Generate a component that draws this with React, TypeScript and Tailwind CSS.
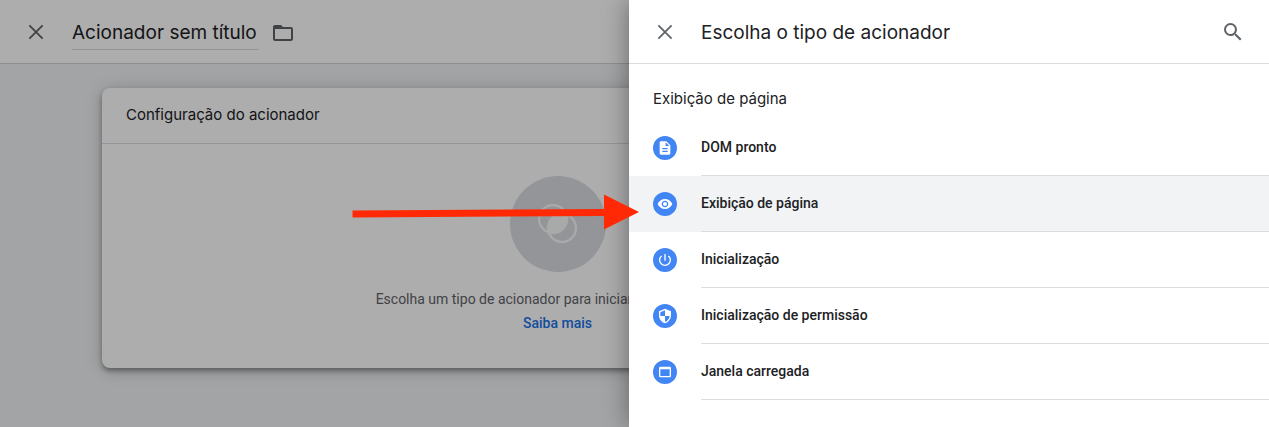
import type { IconType } from "react-icons";
import {
  MdDescription,
  MdFolderOpen,
  MdPowerSettingsNew,
  MdSearch,
  MdSecurity,
  MdVisibility,
  MdWebAsset,
} from "react-icons/md";

type Trigger = { label: string; icon: IconType; active?: boolean };

const triggers: Trigger[] = [
  { label: "DOM pronto", icon: MdDescription },
  { label: "Exibição de página", icon: MdVisibility, active: true },
  { label: "Inicialização", icon: MdPowerSettingsNew },
  { label: "Inicialização de permissão", icon: MdSecurity },
  { label: "Janela carregada", icon: MdWebAsset },
];

function CloseIcon() {
  return (
    <svg viewBox="0 0 24 24" className="size-6" fill="none" stroke="currentColor" strokeWidth="1.8" aria-hidden="true">
      <path d="M5.4 5.4l13.2 13.2M18.6 5.4L5.4 18.6" />
    </svg>
  );
}

function TriggerBadge() {
  return (
    <div className="flex size-24 items-center justify-center rounded-full bg-[#dadce0]">
      <svg viewBox="0 0 40 40" className="size-10" fill="none" aria-hidden="true">
        <clipPath id="lens">
          <circle cx="15" cy="15" r="14" />
        </clipPath>
        <circle cx="24" cy="24" r="14" fill="#f8f9fa" clipPath="url(#lens)" />
        <circle cx="15" cy="15" r="14" stroke="#f8f9fa" strokeWidth="2.4" />
        <circle cx="24" cy="24" r="14" stroke="#f8f9fa" strokeWidth="2.4" />
      </svg>
    </div>
  );
}

function TriggerEditor() {
  return (
    <div className="flex min-h-screen flex-col bg-[#eff2f5]">
      <header className="flex h-16 items-center border-b border-[#d2d3d4] bg-white px-6 text-[#5f6368]">
        <button type="button" aria-label="Fechar">
          <CloseIcon />
        </button>
        <input
          type="text"
          aria-label="Nome do acionador"
          defaultValue="Acionador sem título"
          className="ml-6 h-9 w-[187px] border-b border-[#dadce0] pt-0.5 font-[Inter,sans-serif] text-[19px] text-[#202124] outline-none"
        />
        <button type="button" aria-label="Pasta" className="mt-0.5 ml-3">
          <MdFolderOpen className="size-6" />
        </button>
      </header>
      <main className="mt-6 mr-64 mb-14 ml-[102px] rounded-lg bg-white shadow-[0_3px_5px_rgba(0,0,0,0.35),0_2px_18px_rgba(0,0,0,0.2)]">
        <h2 className="flex h-14 items-center border-b border-[#dadce0] px-6 font-[Inter,sans-serif] text-[15px] text-[#202124]">
          Configuração do acionador
        </h2>
        <div className="flex flex-col items-center pt-8 pb-[33px] text-sm leading-6">
          <TriggerBadge />
          <p className="mt-[15px] whitespace-nowrap text-[#5f6368]">
            Escolha um tipo de acionador para iniciar a configuração...
          </p>
          <a href="#saiba-mais" className="font-medium text-[#1a73e8]">
            Saiba mais
          </a>
        </div>
      </main>
    </div>
  );
}

function TriggerDrawer() {
  return (
    <aside className="absolute inset-y-0 right-0 w-[640px] bg-white shadow-[0_0_24px_rgba(0,0,0,0.4)]">
      <header className="flex h-16 items-center border-b border-[#dadce0] px-6 text-[#5f6368]">
        <button type="button" aria-label="Fechar painel">
          <CloseIcon />
        </button>
        <h1 className="ml-6 flex-1 pt-1 font-[Inter,sans-serif] text-[19px] text-[#202124]">
          Escolha o tipo de acionador
        </h1>
        <button type="button" aria-label="Pesquisar">
          <MdSearch className="size-6" />
        </button>
      </header>
      <h2 className="px-6 pt-[23px] pb-[9px] font-[Inter,sans-serif] text-[15px] leading-6 text-[#202124]">
        Exibição de página
      </h2>
      <ul>
        {triggers.map(({ label, icon: Icon, active }) => (
          <li key={label}>
            <button
              type="button"
              className={`flex h-14 w-full items-center gap-6 pl-6 text-left text-sm font-medium text-[#202124] ${active ? "bg-[#f1f3f4]" : ""}`}
            >
              <span className="flex size-6 items-center justify-center rounded-full bg-[#4285f4] text-white">
                <Icon className="size-4" />
              </span>
              <span className="flex h-14 flex-1 items-center border-b border-[#dadce0] pb-px">{label}</span>
            </button>
          </li>
        ))}
      </ul>
    </aside>
  );
}

export default function App() {
  return (
    <div className="relative min-h-screen overflow-hidden font-[Roboto,sans-serif]">
      <TriggerEditor />
      <div className="absolute inset-0 bg-black/32" />
      <TriggerDrawer />
      {/* Arrow pointing at the selected trigger type */}
      <svg
        viewBox="0 0 288 36"
        className="pointer-events-none absolute top-[194px] right-[629px] h-9 w-72"
        fill="#ff2a05"
        aria-hidden="true"
      >
        <path d="M0.5 16.5L252 15V0.5L287 18L252 35.5V22L0.5 23.5z" />
      </svg>
    </div>
  );
}
